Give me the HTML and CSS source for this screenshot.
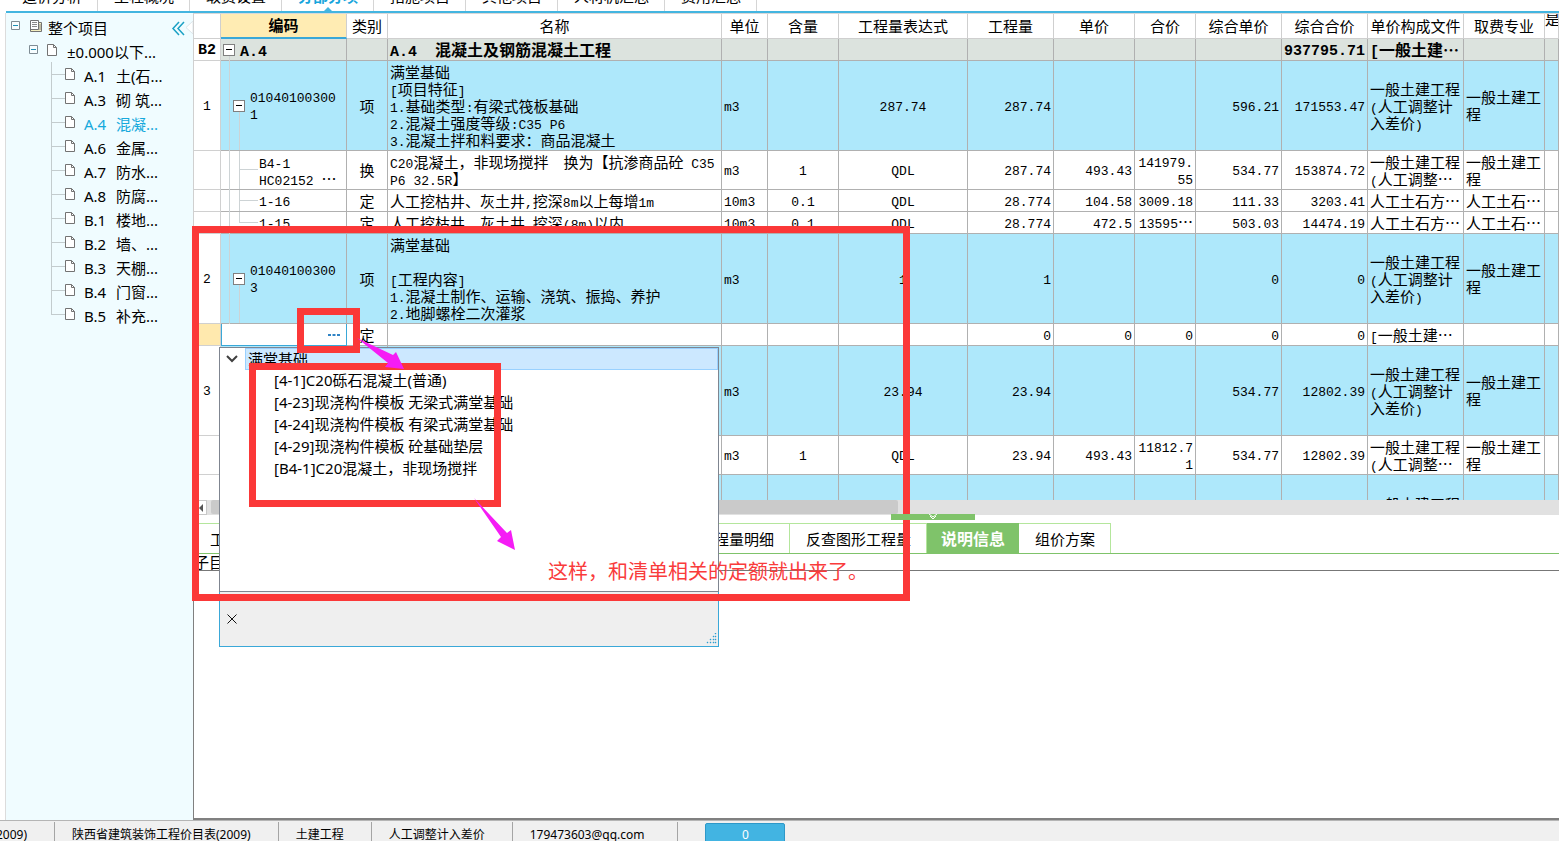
FILE: index.html
```html
<!DOCTYPE html>
<html lang="zh-CN">
<head>
<meta charset="utf-8">
<title>分部分项</title>
<link rel="stylesheet" href="styles.css">
</head>
<body>
<svg width="0" height="0" class="defs" aria-hidden="true">
  <symbol id="doc" viewBox="0 0 12 14"><path d="M1.500 1.500H7.500L10.500 4.500V12.500H1.500Z" fill="#fff" stroke="#737373"/><path d="M7.500 1.500V4.500H10.500" fill="none" stroke="#737373"/></symbol>
  <symbol id="minus" viewBox="0 0 10 10"><path d="M.5.500H8.500V8.500H.5Z" fill="#f7fdff" stroke="#7f8c94"/><path d="M2 4.500H7" stroke="#1c8fb5"/></symbol>
</svg>
<div class="app">
  <nav class="top-tabs">
    <button>造价分析</button><button>工程概况</button><button>取费设置</button><button class="on">分部分项</button><button>措施项目</button><button>其他项目</button><button>人材机汇总</button><button>费用汇总</button>
  </nav>
  <div class="body">
    <aside class="side">
      <svg class="collapse" width="22" height="16" viewBox="0 0 22 16"><path d="M8 1L2 7.500L8 14M13 1L7 7.500L13 14" fill="none" stroke="#1ba1c5" stroke-width="1.500"/><path d="M22 0L15 6.500L22 13Z" fill="#fff" stroke="#dde6ea"/></svg>
      <div class="node root"><svg width="10" height="10"><use href="#minus"/></svg>
        <svg class="book" width="14" height="14" viewBox="0 0 14 14"><path d="M1.500 1.500H9.500V10.500H1.500Z" fill="#fff" stroke="#737373"/><path d="M1.500 8V12.500H12.500V3.500H9.500V10.500H1.500" fill="#f5efc0" stroke="#737373"/><path d="M3 3.500H8M3 5.500H8M3 7.500H8M11 5V11" stroke="#8a8a8a" fill="none"/></svg><span>整个项目</span></div>
      <div class="node sub"><svg width="10" height="10"><use href="#minus"/></svg><svg width="12" height="14"><use href="#doc"/></svg><span>±0.000以下...</span></div>
      <ul class="tree">
        <li><svg width="12" height="14"><use href="#doc"/></svg><b>A.1</b><span>土(石...</span></li>
        <li><svg width="12" height="14"><use href="#doc"/></svg><b>A.3</b><span>砌 筑...</span></li>
        <li class="on"><svg width="12" height="14"><use href="#doc"/></svg><b>A.4</b><span>混凝...</span></li>
        <li><svg width="12" height="14"><use href="#doc"/></svg><b>A.6</b><span>金属...</span></li>
        <li><svg width="12" height="14"><use href="#doc"/></svg><b>A.7</b><span>防水...</span></li>
        <li><svg width="12" height="14"><use href="#doc"/></svg><b>A.8</b><span>防腐...</span></li>
        <li><svg width="12" height="14"><use href="#doc"/></svg><b>B.1</b><span>楼地...</span></li>
        <li><svg width="12" height="14"><use href="#doc"/></svg><b>B.2</b><span>墙、...</span></li>
        <li><svg width="12" height="14"><use href="#doc"/></svg><b>B.3</b><span>天棚...</span></li>
        <li><svg width="12" height="14"><use href="#doc"/></svg><b>B.4</b><span>门窗...</span></li>
        <li><svg width="12" height="14"><use href="#doc"/></svg><b>B.5</b><span>补充...</span></li>
      </ul>
    </aside>
    <main class="main">
      <div class="grid">
        <table>
          <colgroup><col class="c-no"><col class="c-code"><col class="c-kind"><col class="c-name"><col class="c-unit"><col class="c-qty"><col class="c-expr"><col class="c-86"><col class="c-81"><col class="c-61"><col class="c-86"><col class="c-86"><col class="c-96"><col class="c-81"><col class="c-last"></colgroup>
          <thead><tr><th></th><th class="hot">编码</th><th>类别</th><th>名称</th><th>单位</th><th>含量</th><th>工程量表达式</th><th>工程量</th><th>单价</th><th>合价</th><th>综合单价</th><th>综合合价</th><th>单价构成文件</th><th>取费专业</th><th class="cut">是</th></tr></thead>
          <tbody>
            <tr class="group h22"><td class="no n">B2</td><td class="code top"><i class="box"></i><span class="n">A.4</span></td><td></td><td><span class="n">A.4&nbsp; </span>混凝土及钢筋混凝土工程</td><td></td><td></td><td></td><td></td><td></td><td></td><td></td><td class="num">937795.71</td><td><span class="n">[</span>一般土建…</td><td></td><td></td></tr>
            <tr class="item h90"><td class="no n">1</td><td class="code parent n"><i class="box"></i>010401003001</td><td class="mid">项</td><td>满堂基础<br><span class="n">[</span>项目特征<span class="n">]</span><br><span class="n">1.</span>基础类型<span class="n">:</span>有梁式筏板基础<br><span class="n">2.</span>混凝土强度等级<span class="n">:C35 P6</span><br><span class="n">3.</span>混凝土拌和料要求：商品混凝土</td><td class="n">m3</td><td></td><td class="n mid">287.74</td><td class="num">287.74</td><td></td><td></td><td class="num">596.21</td><td class="num">171553.47</td><td>一般土建工程<br><span class="n">(</span>人工调整计<br>入差价<span class="n">)</span></td><td>一般土建工程</td><td></td></tr>
            <tr class="h39"><td class="no"></td><td class="code leaf"><span class="n">B4-1<br>HC02152 </span>…</td><td class="mid">换</td><td><span class="n">C20</span>混凝土，非现场搅拌　换为【抗渗商品砼<span class="n"> C35<br>P6 32.5R</span>】</td><td class="n">m3</td><td class="n mid">1</td><td class="n mid">QDL</td><td class="num">287.74</td><td class="num">493.43</td><td class="num">141979.55</td><td class="num">534.77</td><td class="num">153874.72</td><td>一般土建工程<br><span class="n">(</span>人工调整…</td><td>一般土建工程</td><td></td></tr>
            <tr class="h22"><td class="no"></td><td class="code leaf n">1-16</td><td class="mid">定</td><td>人工挖枯井、灰土井<span class="n">,</span>挖深<span class="n">8m</span>以上每增<span class="n">1m</span></td><td class="n">10m3</td><td class="n mid">0.1</td><td class="n mid">QDL</td><td class="num">28.774</td><td class="num">104.58</td><td class="num">3009.18</td><td class="num">111.33</td><td class="num">3203.41</td><td>人工土石方…</td><td>人工土石…</td><td></td></tr>
            <tr class="h22"><td class="no"></td><td class="code leaf last n">1-15</td><td class="mid">定</td><td>人工挖枯井、灰土井<span class="n">,</span>挖深<span class="n">(8m)</span>以内</td><td class="n">10m3</td><td class="n mid">0.1</td><td class="n mid">QDL</td><td class="num">28.774</td><td class="num">472.5</td><td class="num">13595<span class="cjk">…</span></td><td class="num">503.03</td><td class="num">14474.19</td><td>人工土石方…</td><td>人工土石…</td><td></td></tr>
            <tr class="item h90"><td class="no n">2</td><td class="code parent n"><i class="box"></i>010401003003</td><td class="mid">项</td><td>满堂基础<br><br><span class="n">[</span>工程内容<span class="n">]</span><br><span class="n">1.</span>混凝土制作、运输、浇筑、振捣、养护<br><span class="n">2.</span>地脚螺栓二次灌浆</td><td class="n">m3</td><td></td><td class="n mid">1</td><td class="num">1</td><td></td><td></td><td class="num">0</td><td class="num">0</td><td>一般土建工程<br><span class="n">(</span>人工调整计<br>入差价<span class="n">)</span></td><td>一般土建工程</td><td></td></tr>
            <tr class="h22"><td class="no now"></td><td class="edit"><div><input type="text" aria-label="编码"><button aria-label="选择"><svg width="12" height="4" viewBox="0 0 12 4"><path d="M0 1H3V3H0ZM4.500 1H7.500V3H4.500ZM9 1H12V3H9Z" fill="#2f83c5"/></svg></button></div></td><td class="mid">定</td><td></td><td></td><td></td><td></td><td class="num">0</td><td class="num">0</td><td class="num">0</td><td class="num">0</td><td class="num">0</td><td><span class="n">[</span>一般土建…</td><td></td><td></td></tr>
            <tr class="item h90"><td class="no n">3</td><td></td><td></td><td></td><td class="n">m3</td><td></td><td class="n mid">23.94</td><td class="num">23.94</td><td></td><td></td><td class="num">534.77</td><td class="num">12802.39</td><td>一般土建工程<br><span class="n">(</span>人工调整计<br>入差价<span class="n">)</span></td><td>一般土建工程</td><td></td></tr>
            <tr class="h39"><td class="no"></td><td></td><td></td><td></td><td class="n">m3</td><td class="n mid">1</td><td class="n mid">QDL</td><td class="num">23.94</td><td class="num">493.43</td><td class="num">11812.71</td><td class="num">534.77</td><td class="num">12802.39</td><td>一般土建工程<br><span class="n">(</span>人工调整…</td><td>一般土建工程</td><td></td></tr>
            <tr class="item h90"><td class="no"></td><td></td><td></td><td></td><td></td><td></td><td></td><td></td><td></td><td></td><td></td><td></td><td class="low">一般土建工程</td><td></td><td></td></tr>
          </tbody>
        </table>
      </div>
      <div class="hscroll"><button aria-label="向左滚动"><svg width="6" height="8" viewBox="0 0 6 8"><path d="M5 0V8L1 4Z" fill="#555"/></svg></button><div class="thumb"></div>
        <div class="handle"><svg width="10" height="6" viewBox="0 0 10 6"><path d="M1 0L5 3L9 0M2 2L5 5L8 2" fill="none" stroke="#fff"/></svg></div></div>
      <nav class="low-tabs"><button>工料机显示</button><span class="gap"></span><button>工程量明细</button><button>反查图形工程量</button><button class="on">说明信息</button><button>组价方案</button></nav>
      <section class="detail"><div class="caption">子目</div></section>
    </main>
  </div>
  <footer class="status"><span class="first">2009)</span><span>陕西省建筑装饰工程价目表(2009)</span><span>土建工程</span><span>人工调整计入差价</span><span class="mail">179473603@qq.com</span><button>0</button></footer>
</div>

<div class="popup">
  <div class="list">
    <div class="head"><svg width="12" height="8" viewBox="0 0 12 8"><path d="M1 1L6 6L11 1" fill="none" stroke="#404040" stroke-width="2"/></svg><span>满堂基础</span></div>
    <ul><li>[4-1]C20砾石混凝土(普通)</li><li>[4-23]现浇构件模板 无梁式满堂基础</li><li>[4-24]现浇构件模板 有梁式满堂基础</li><li>[4-29]现浇构件模板 砼基础垫层</li><li>[B4-1]C20混凝土，非现场搅拌</li></ul>
  </div>
  <div class="foot"><button aria-label="关闭"><svg width="10" height="10" viewBox="0 0 10 10"><path d="M.5.500L9.500 9.500M9.500.500L.5 9.500" stroke="#111"/></svg></button>
    <svg class="grip" width="11" height="11" viewBox="0 0 11 11"><path d="M9 0h1v1h-1zM7 3h1v1h-1zM9 3h1v1h-1zM4 6h1v1h-1zM7 6h1v1h-1zM9 6h1v1h-1zM1 9h1v1h-1zM4 9h1v1h-1zM7 9h1v1h-1zM9 9h1v1h-1z" fill="#2f9fd0" stroke="#2f9fd0" stroke-width=".4"/></svg></div>
</div>
<svg class="marks" width="920" height="610" viewBox="0 0 920 610" aria-hidden="true">
  <g fill="none" stroke="#fb3838" stroke-width="7"><rect x="195.500" y="229.500" width="711" height="368"/><rect x="300.500" y="311.500" width="56" height="38"/><rect x="252.500" y="366.500" width="245" height="137"/></g>
  <g fill="#f51cf5"><path d="M357 338L393 355L396 352L404 369L385 367L388 363Z"/><path d="M474 498L507 533L511 530L515 550L497 541L501 537Z"/></g>
</svg>
<p class="note">这样，和清单相关的定额就出来了。</p>
</body>
</html>
```
FILE: styles.css
```css
* { box-sizing: border-box; }
body { margin: 0; overflow: hidden; background: #fff; color: #000; font: 15px/22px "Noto Sans", "Noto Sans CJK SC", sans-serif; }
button, input { font: inherit; color: inherit; padding: 0; margin: 0; border: 0; background: none; border-radius: 0; }
ul { list-style: none; margin: 0; padding: 0; }
svg { display: block; flex: none; }
.defs { position: absolute; }
.app { display: flex; flex-direction: column; height: 100vh; }

/* upper module tabs, scrolled partly out of the window */
.top-tabs { flex: none; display: flex; align-items: flex-end; height: 13px; margin-left: 6px; border-bottom: 2px solid #43b5e0; overflow: hidden; font-family: "Noto Sans CJK SC", sans-serif; }
.top-tabs button { position: relative; padding: 0 15px 0 16px; line-height: 18px; height: 24px; border-right: 1px solid #d5d5d5; display: flex; align-items: flex-start; }
.top-tabs .on { color: #16a5dc; font-weight: bold; }
.top-tabs .on::after { content: ""; position: absolute; left: 42px; bottom: 0; border: 4px solid transparent; border-top: 0; border-bottom-color: #43b5e0; }

.body { flex: 1; min-height: 0; display: flex; padding-left: 5px; }
.side { position: relative; flex: none; width: 188px; background: #f0fcff; border-left: 1px solid #dcdcdc; padding-top: 3px; }
.collapse { position: absolute; right: 0; top: 8px; }
.node { display: flex; align-items: center; height: 24px; padding-left: 5px; white-space: nowrap; }
.node svg { margin-bottom: 5px; }
.node .book { margin-left: 8px; }
.node span { margin-left: 5px; }
.node.sub { padding-left: 23px; }
.sub svg + svg { margin-left: 7px; }
.sub span { margin-left: 9px; }
.tree li { position: relative; display: flex; align-items: center; height: 24px; padding-left: 58px; white-space: nowrap; }
.tree li::before { content: ""; position: absolute; left: 45px; top: -14px; width: 13px; height: 24px; border: solid #c3ccce; border-width: 0 0 1px 1px; }
.tree li:first-child::before { top: -2px; height: 12px; }
.tree svg { margin-bottom: 5px; }
.tree b { font-weight: normal; width: 32px; margin-left: 8px; }
.tree .on { color: #16a9dc; }

.main { flex: 1; min-width: 0; display: flex; flex-direction: column; }

/* bill of quantities */
.grid { flex: none; height: 487px; overflow: hidden; border-left: 1px solid #d0d0d0; border-top: 1px solid #d8d8d8; }
table { table-layout: fixed; width: 100%; border-collapse: separate; border-spacing: 0; font: 15px/17px "Noto Sans CJK SC", sans-serif; }
.c-no { width: 27px; } .c-code { width: 126px; } .c-kind { width: 41px; } .c-unit { width: 46px; }
.c-qty { width: 71px; } .c-expr { width: 129px; } .c-86 { width: 86px; } .c-81 { width: 81px; }
.c-61 { width: 61px; } .c-96 { width: 96px; } .c-last { width: 14px; }
th { height: 25px; padding: 0 0 2px; font-weight: normal; white-space: nowrap; border: solid #cfcfcf; border-width: 0 1px 1px 0; }
.hot { background: #ffecb3; font-weight: bold; border-bottom: 2px solid #3aa8d8; }
.cut { overflow: hidden; vertical-align: top; line-height: 9px; }
td { padding: 0 2px 1px; border: solid #b0b0b0; border-width: 0 1px 1px 0; word-break: break-all; }
.h22 td { height: 22px; } .h39 td { height: 39px; } .h90 td { height: 90px; }
.n, .num { font-family: "Liberation Mono", monospace; font-size: 13px; }
td.n, td.num { padding-top: 3px; padding-bottom: 0; }
span.n { line-height: 0; white-space: pre-wrap; }
.cjk { font-family: "Noto Sans CJK SC", sans-serif; font-size: 15px; line-height: 0; }
.mid { text-align: center; }
.num { text-align: right; }
.item td { background-color: #aee8fb; }
.group td { background: #dce3de; font-weight: bold; font-size: 16px; white-space: nowrap; }
.group .n, .group .num, .group td.no { font-size: 15px; }
.group .num { padding-left: 0; }
td.no, .item td.no, .group td.no { background: #fff; text-align: center; padding: 2px 0 0; border-color: #d0d0d0; }
td.no.now { background: #ffe9ae; }
td.low { vertical-align: top; padding-top: 20px; }
.code { position: relative; }
.code.top { padding-left: 19px; }
.code.parent, .code.leaf { background-image: linear-gradient(#cdd3d5, #cdd3d5); background-size: 1px 100%; background-repeat: no-repeat; background-position: 18px 0; }
.code.parent { padding-left: 29px; padding-right: 5px; background-size: 1px 38px; background-position: 18px 100%; }
.code.leaf { padding-left: 38px; }
.code.last { background: none; }
.code::before, .code.leaf::after { content: ""; position: absolute; left: 8px; top: 0; bottom: -1px; border-left: 1px solid #cdd3d5; }
.code.top::before { top: 17px; }
.code.leaf::after { left: 18px; bottom: 50%; width: 18px; border-bottom: 1px solid #cdd3d5; }
.box { position: absolute; left: 2px; top: 5px; width: 12px; height: 12px; border: 1px solid #808080; background: #fff; z-index: 1; }
.parent .box { left: 12px; top: 39px; }
.box::after { content: ""; position: absolute; left: 2px; top: 4px; width: 6px; border-top: 1px solid #000; }
td.edit { padding: 0; border-color: #3aa8d8; }
.edit div { display: flex; height: 21px; border-left: 1px solid #3aa8d8; }
.edit input { flex: 1; min-width: 0; outline: 0; }
.edit button { width: 18px; }

.hscroll { position: relative; flex: none; display: flex; height: 15px; background: #e1e1e1; padding-left: 1px; }
.hscroll > button { display: grid; place-items: center; width: 13px; background: #fff; border: 1px solid #c8c8c8; }
.thumb { width: 687px; margin-left: 4px; height: 14px; background: #cacaca; border-radius: 2px; }
.handle { position: absolute; left: 698px; bottom: -5px; width: 84px; height: 6px; background: #7fc36a; display: grid; place-items: center; z-index: 1; }
.low-tabs { flex: none; display: flex; margin-top: 8px; padding-left: 1px; border-bottom: 1px solid #7fc36a; font-family: "Noto Sans CJK SC", sans-serif; }
.low-tabs button { flex: none; height: 30px; padding: 1px 15px 0 16px; border: solid #b4e69c; border-width: 1px 1px 0 0; white-space: nowrap; }
.low-tabs .gap { width: 382px; border-top: 1px solid #b4e69c; }
.low-tabs .on { background: #7fc36a; border-color: #7fc36a; color: #fff; font-size: 16px; font-weight: bold; padding: 0 13px 1px 14px; }
.detail { flex: 1; border: solid #808080; border-width: 0 0 2px 1px; }
.caption { height: 17px; line-height: 15px; border-bottom: 1px solid #777; font-family: "Noto Sans CJK SC", sans-serif; }

.status { flex: none; display: flex; height: 21px; overflow: hidden; background: #f0f0f0; border-top: 1px solid #b5b5b5; font-size: 12px; }
.status span { padding: 2px 27px 0 17px; border-right: 1px solid #a5a5a5; height: 24px; white-space: nowrap; margin-top: 1px; }
.status .first { width: 55px; padding-left: 0; display: flex; justify-content: flex-end; }
.status .mail { padding-right: 33px; }
.status button { width: 80px; height: 24px; margin: 2px 0 0 27px; border: 1px solid #2e98c8; border-radius: 2px; background: #42b4e2; color: #fff; }

.popup { position: absolute; left: 219px; top: 347px; width: 500px; }
.list { height: 245px; background: #fff; border: 1px solid #7f8590; }
.popup .head { display: flex; align-items: center; height: 22px; }
.head svg { margin: 0 7px 0 6px; }
.head span { flex: 1; height: 22px; line-height: 20px; padding-left: 2px; background: #cce8ff; border: 1px solid #99d1ff; }
.popup li { padding-left: 54px; height: 22px; line-height: 20px; white-space: nowrap; }
.foot { position: relative; height: 55px; background: #efefef; border: solid #3aa8d8; border-width: 0 1px 1px; }
.foot button { display: block; padding: 22px 0 0 7px; }
.grip { position: absolute; right: 1px; bottom: 2px; }
.marks { position: absolute; left: 0; top: 0; pointer-events: none; }
.note { position: absolute; left: 548px; top: 559px; margin: 0; color: #f93b3b; font: 20px/24px "Noto Sans CJK SC", sans-serif; white-space: nowrap; }
```
